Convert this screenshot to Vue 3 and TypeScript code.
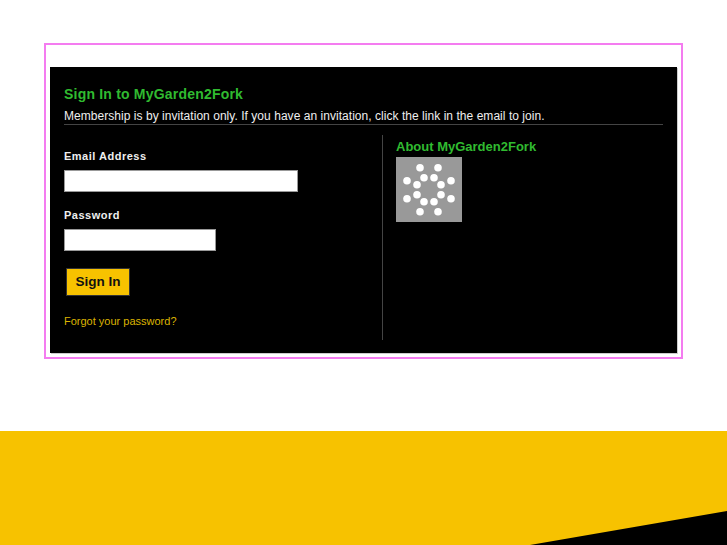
<script setup lang="ts">
const dots: [number, number][] = [
  [24, 10.7], [42, 10.7], [11, 23.7], [28, 20.7], [38, 20.7], [55, 23.7], [21, 27.7], [45, 27.7],
  [11, 41.7], [21, 37.7], [45, 37.7], [55, 41.7], [28, 44.7], [38, 44.7], [24, 54.7], [42, 54.7],
]
</script>

<template>
  <div class="page">
    <main class="frame">
      <section class="panel">
        <h1 class="title">Sign In to MyGarden2Fork</h1>
        <p class="intro">Membership is by invitation only. If you have an invitation, click the link in the email to join.</p>
        <div class="columns">
          <form class="signin" @submit.prevent>
            <label class="label" for="email">Email Address</label>
            <input id="email" class="input email" type="text" />
            <label class="label pw" for="password">Password</label>
            <input id="password" class="input password" type="password" />
            <button class="btn" type="submit">Sign In</button>
            <a class="forgot" href="#">Forgot your password?</a>
          </form>
          <aside class="about">
            <h2 class="about-title">About MyGarden2Fork</h2>
            <svg class="logo" width="66" height="65" viewBox="0 0 66 65" aria-label="MyGarden2Fork logo">
              <rect width="66" height="65" fill="#999" />
              <circle v-for="(d, i) in dots" :key="i" :cx="d[0]" :cy="d[1]" r="3.8" fill="#fff" />
            </svg>
          </aside>
        </div>
      </section>
    </main>
    <footer class="band">
      <svg class="wedge" width="197" height="34" viewBox="0 0 197 34"><polygon points="0,34 197,0 197,34" fill="#000" /></svg>
    </footer>
  </div>
</template>

<style>
html, body { margin: 0; background: #fff; }
</style>

<style scoped>
.page {
  width: 727px;
  height: 545px;
  display: flex;
  flex-direction: column;
  overflow: hidden;
  font-family: "Liberation Sans", Arial, sans-serif;
}
.frame {
  box-sizing: border-box;
  width: 639px;
  height: 316px;
  margin: 43px 0 0 44px;
  border: 2px solid #f47cf0;
  padding: 22px 4px 4px;
}
.panel {
  box-sizing: border-box;
  height: 286px;
  background: #000;
  padding: 18px 14px 13px;
  box-shadow: 1px 1px 0 #ccc;
  display: flex;
  flex-direction: column;
}
.title {
  margin: 0;
  font-size: 14px;
  line-height: 18px;
  font-weight: 700;
  color: #30bb30;
  letter-spacing: 0.2px;
}
.intro {
  margin: 6px 0 0;
  font-size: 12px;
  line-height: 15px;
  color: #eee;
  letter-spacing: 0.04px;
  border-bottom: 1px solid #444;
}
.columns {
  display: flex;
  flex: 1;
  margin-top: 10px;
}
.signin {
  box-sizing: border-box;
  width: 319px;
  border-right: 1px solid #444;
  display: flex;
  flex-direction: column;
  align-items: flex-start;
  padding-top: 14px;
}
.label {
  font-size: 11px;
  line-height: 14px;
  font-weight: 700;
  color: #eee;
  letter-spacing: 0.5px;
}
.pw { margin-top: 16px; }
.input {
  box-sizing: border-box;
  height: 22px;
  margin: 7px 0 0;
  background: #fff;
  border: 1px solid #999;
  padding: 0;
}
.email { width: 234px; }
.password { width: 152px; }
.btn {
  box-sizing: border-box;
  width: 64px;
  height: 28px;
  margin: 17px 0 0 2px;
  padding: 0 0 2px;
  background: #f7c200;
  border: 1px solid #333;
  font-family: inherit;
  font-size: 13.5px;
  font-weight: 700;
  color: #111;
}
.forgot {
  margin-top: 18px;
  font-size: 11px;
  line-height: 14px;
  color: #dcb400;
  text-decoration: none;
}
.about {
  padding: 4px 0 0 13px;
}
.about-title {
  margin: 0;
  font-size: 13px;
  line-height: 16px;
  font-weight: 700;
  color: #30bb30;
}
.logo { display: block; margin-top: 2px; }
.band {
  position: relative;
  margin-top: 72px;
  height: 114px;
  background: #f7c200;
}
.wedge {
  position: absolute;
  right: 0;
  bottom: 0;
}
</style>
